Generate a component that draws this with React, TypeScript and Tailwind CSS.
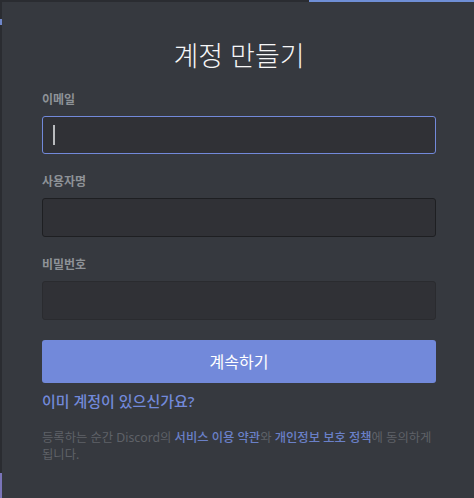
export default function App() {
    return (
        <div
            className="relative h-[498px] w-[474px] overflow-hidden bg-[#36393f]"
            style={{ fontFamily: '"Noto Sans", "Noto Sans CJK KR", sans-serif' }}
        >
            {/* window edges */}
            <div className="absolute left-0 top-0 h-[2px] w-full bg-[#2a2c31]" />
            <div className="absolute right-0 top-0 h-[2px] w-[165px] bg-[#6f8fd6]" />
            <div className="absolute left-0 top-0 h-full w-[2px] bg-[#2a2c31]" />
            <div className="absolute left-0 top-[19px] h-[6px] w-[2px] bg-[#6f86c9]" />
            <div className="absolute bottom-0 left-0 h-[25px] w-[2px] bg-[#7a74b8]" />

            <div className="flex flex-col pl-[42px] pr-[38px] pt-[36px]">
                <h1 className="h-[40px] text-center text-[27px] font-light leading-[40px] text-[#f6f6f7]">계정 만들기</h1>

                <div className="mt-[16px] h-[16px] text-[12px] font-bold leading-[16px] text-[#8e9297]">이메일</div>
                <div className="mt-[8px] flex h-[38px] items-center rounded-[3px] border border-[#7289da] bg-[#303136] px-[10px]">
                    <div className="h-[20px] w-[2px] bg-[#b9bbbe]" />
                </div>

                <div className="mt-[20px] h-[16px] text-[12px] font-bold leading-[16px] text-[#8e9297]">사용자명</div>
                <div className="mt-[8px] h-[39px] rounded-[3px] border border-[#1e1f22] bg-[#303136]" />

                <div className="mt-[20px] h-[16px] text-[12px] font-bold leading-[16px] text-[#8e9297]">비밀번호</div>
                <div className="mt-[8px] h-[39px] rounded-[3px] border border-[#2a2b2f] bg-[#303136]" />

                <button className="mt-[20px] h-[43px] rounded-[3px] bg-[#7289da] text-[16px] font-normal text-white">
                    계속하기
                </button>

                <a className="mt-[8px] h-[20px] text-[15px] font-medium leading-[20px] text-[#7289da]">이미 계정이 있으신가요?</a>

                <div className="mt-[18px] flex flex-col text-[12.3px] leading-[17px] text-[#5f6268]">
                    <span className="whitespace-nowrap">
                        등록하는 순간 Discord의 <span className="font-medium text-[#6a80c8]">서비스 이용 약관</span>와{' '}
                        <span className="font-medium text-[#6a80c8]">개인정보 보호 정책</span>에 동의하게
                    </span>
                    <span>됩니다.</span>
                </div>
            </div>
        </div>
    );
}
